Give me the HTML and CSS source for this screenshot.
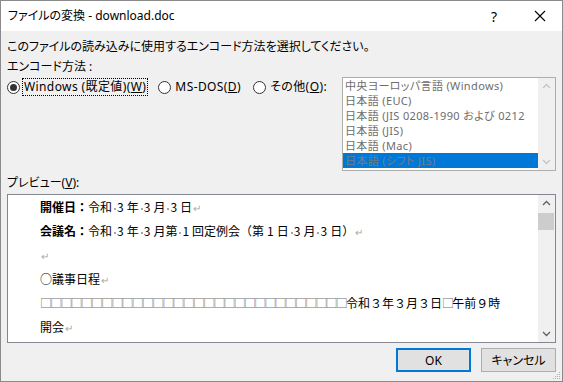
FILE: index.html
```html
<!DOCTYPE html>
<html lang="ja">
<head>
    <meta charset="UTF-8">
    <title>ファイルの変換 - download.doc</title>
    <link rel="stylesheet" href="styles.css">
</head>
<body>
<div class="window">
    <div class="titlebar">
        <span class="title">ファイルの変換 - download.doc</span>
        <span class="help">?</span>
        <svg class="close" width="12" height="12" viewBox="0 0 12 12">
            <path d="M1 1 L11 11 M11 1 L1 11" stroke="#000" stroke-width="1.1" fill="none"/>
        </svg>
    </div>

    <div class="content">
        <p class="line">このファイルの読み込みに使用するエンコード方法を選択してください。</p>
        <p class="line gap">エンコード方法 :</p>

        <div class="encoding-row">
            <div class="radios">
                <label class="radio">
                    <span class="circle checked"></span>
                    <span class="focus">Windows (既定値)(<u>W</u>)</span>
                </label>
                <label class="radio">
                    <span class="circle"></span>
                    <span class="text">MS-DOS(<u>D</u>)</span>
                </label>
                <label class="radio">
                    <span class="circle"></span>
                    <span class="text">その他(<u>O</u>):</span>
                </label>
            </div>

            <div class="listbox">
                <ul class="items">
                    <li>中央ヨーロッパ言語 (Windows)</li>
                    <li>日本語 (EUC)</li>
                    <li>日本語 (JIS 0208-1990 および 0212</li>
                    <li>日本語 (JIS)</li>
                    <li>日本語 (Mac)</li>
                    <li class="selected">日本語 (シフト JIS)</li>
                </ul>
                <div class="scrollbar disabled">
                    <svg class="arrow" width="17" height="17" viewBox="0 0 17 17"><path d="M5 10 L8.5 6.5 L12 10" stroke="#c5c5c5" stroke-width="1.3" fill="none"/></svg>
                    <div class="track"></div>
                    <svg class="arrow" width="17" height="17" viewBox="0 0 17 17"><path d="M5 7 L8.5 10.5 L12 7" stroke="#c5c5c5" stroke-width="1.3" fill="none"/></svg>
                </div>
            </div>
        </div>

        <p class="line preview-label">プレビュー(<u>V</u>):</p>

        <div class="preview">
            <div class="doc">
                <div class="doc-line"><b>開催日：</b>令和<i class="sp"></i>3<i class="th"></i>年<i class="sp"></i>3<i class="th"></i>月<i class="sp"></i>3<i class="th"></i>日<span class="ret">↵</span></div>
                <div class="doc-line"><b>会議名：</b>令和<i class="sp"></i>3<i class="th"></i>年<i class="sp"></i>3<i class="th"></i>月第<i class="sp"></i>1<i class="th"></i>回定例会（第<i class="th"></i>1<i class="th"></i>日<i class="sp"></i>3<i class="th"></i>月<i class="sp"></i>3<i class="th"></i>日）<span class="ret">↵</span></div>
                <div class="doc-line"><span class="ret">↵</span></div>
                <div class="doc-line">○議事日程<span class="ret">↵</span></div>
                <div class="doc-line"><span class="tofu">□□□□□□□□□□□□□□□□□□□□□□□□□□□□□□</span>令和３年３月３日<span class="tofu">□</span>午前９時</div>
                <div class="doc-line">開会<span class="ret">↵</span></div>
            </div>
            <div class="scrollbar">
                <svg class="arrow" width="17" height="17" viewBox="0 0 17 17"><path d="M5 10 L8.5 6.5 L12 10" stroke="#606060" stroke-width="1.3" fill="none"/></svg>
                <div class="track"><div class="thumb"></div></div>
                <svg class="arrow" width="17" height="17" viewBox="0 0 17 17"><path d="M5 7 L8.5 10.5 L12 7" stroke="#606060" stroke-width="1.3" fill="none"/></svg>
            </div>
        </div>

        <div class="buttons">
            <button class="btn default">OK</button>
            <button class="btn">キャンセル</button>
        </div>
    </div>

    <svg class="grip" width="10" height="10" viewBox="0 0 10 10">
        <rect x="7" y="1" width="1" height="1" fill="#b0b0b0"/>
        <rect x="5" y="3" width="1" height="1" fill="#b0b0b0"/>
        <rect x="7" y="3" width="1" height="1" fill="#b0b0b0"/>
        <rect x="3" y="5" width="1" height="1" fill="#b0b0b0"/>
        <rect x="5" y="5" width="1" height="1" fill="#b0b0b0"/>
        <rect x="7" y="5" width="1" height="1" fill="#b0b0b0"/>
        <rect x="1" y="7" width="1" height="1" fill="#b0b0b0"/>
        <rect x="3" y="7" width="1" height="1" fill="#b0b0b0"/>
        <rect x="5" y="7" width="1" height="1" fill="#b0b0b0"/>
        <rect x="7" y="7" width="1" height="1" fill="#b0b0b0"/>
    </svg>
</div>
</body>
</html>
```

FILE: styles.css
```css
* {
    box-sizing: border-box;
    margin: 0;
    padding: 0;
}

body {
    font-family: "Noto Sans", "Noto Sans CJK JP", sans-serif;
    font-size: 12px;
    font-feature-settings: "palt";
    color: #000;
    background: #f0f0f0;
}

.window {
    position: relative;
    width: 563px;
    height: 382px;
    border: 1px solid #8a8a8a;
    background: #f0f0f0;
    overflow: hidden;
}

.titlebar {
    display: flex;
    align-items: center;
    height: 30px;
    background: #fff;
    padding-left: 7px;
}

.title {
    flex: 1;
    line-height: 16px;
    padding-bottom: 1px;
}

.help {
    font-size: 14px;
    width: 20px;
    text-align: center;
    margin-right: 30px;
}

.close {
    margin-right: 16px;
}

.content {
    padding: 8px 6px 0 6px;
}

.line {
    line-height: 16px;
    white-space: nowrap;
}

.gap {
    margin-top: 4px;
}

.encoding-row {
    display: flex;
    justify-content: space-between;
    align-items: flex-start;
    margin-top: 2px;
}

.radios {
    display: flex;
    margin-top: 1px;
    letter-spacing: 0.4px;
}

.radio {
    display: flex;
    align-items: center;
    height: 18px;
    white-space: nowrap;
}

.circle {
    width: 13px;
    height: 13px;
    border: 1px solid #333;
    border-radius: 50%;
    background: #fff;
    position: relative;
}

.circle.checked::after {
    content: "";
    position: absolute;
    left: 2px;
    top: 2px;
    width: 7px;
    height: 7px;
    border-radius: 50%;
    background: #333;
}

.focus {
    margin-left: 2px;
    padding: 0 1px 0 1px;
    border: 1px dotted #000;
    line-height: 16px;
    margin-right: 10px;
}

.text {
    margin-left: 4px;
    margin-right: 12px;
    line-height: 16px;
}

.listbox {
    display: flex;
    width: 214px;
    height: 94px;
    border: 1px solid #adadad;
    background: #fff;
}

.items {
    flex: 1;
    list-style: none;
    color: #6d6d6d;
    font-size: 11px;
    letter-spacing: 0.35px;
    overflow: hidden;
}

.items li {
    height: 15px;
    line-height: 15px;
    padding-left: 2px;
    white-space: nowrap;
    overflow: hidden;
}

.items li.selected {
    background: #0078d7;
    color: #7a7a7a;
}

.scrollbar {
    display: flex;
    flex-direction: column;
    width: 17px;
    background: #f0f0f0;
}

.arrow {
    display: block;
    flex: none;
}

.track {
    flex: 1;
}

.thumb {
    height: 17px;
    margin: 1px 1px 0 0;
    background: #cdcdcd;
}

.preview-label {
    margin-top: 4px;
}

.preview {
    display: flex;
    height: 149px;
    margin-top: 3px;
    border: 1px solid #828790;
    background: #fff;
}

.doc {
    flex: 1;
    padding-left: 32px;
    font-family: "Noto Sans CJK JP", sans-serif;
    font-feature-settings: normal;
    overflow: hidden;
}

.doc-line {
    height: 24px;
    line-height: 24px;
    white-space: nowrap;
}

.doc-line b {
    font-weight: bold;
}

.sp {
    display: inline-block;
    width: 2px;
    height: 2px;
    margin: 0 1px 0 2px;
    vertical-align: middle;
    background: #a8a8a8;
}

.th {
    display: inline-block;
    width: 3px;
}

.ret {
    color: #a8a8a8;
    font-size: 10px;
    margin-left: 1px;
}

.tofu {
    color: #6e6e6e;
    letter-spacing: -1.8px;
}

.buttons {
    display: flex;
    justify-content: flex-end;
    gap: 10px;
    margin-top: 5px;
}

.btn {
    width: 75px;
    height: 24px;
    font-family: "Noto Sans", "Noto Sans CJK JP", sans-serif;
    font-size: 12px;
    font-feature-settings: "palt";
    background: #e1e1e1;
    border: 1px solid #adadad;
    color: #000;
}

.btn.default {
    border: 2px solid #0078d7;
}

.grip {
    position: absolute;
    right: 0;
    bottom: 0;
}
```
